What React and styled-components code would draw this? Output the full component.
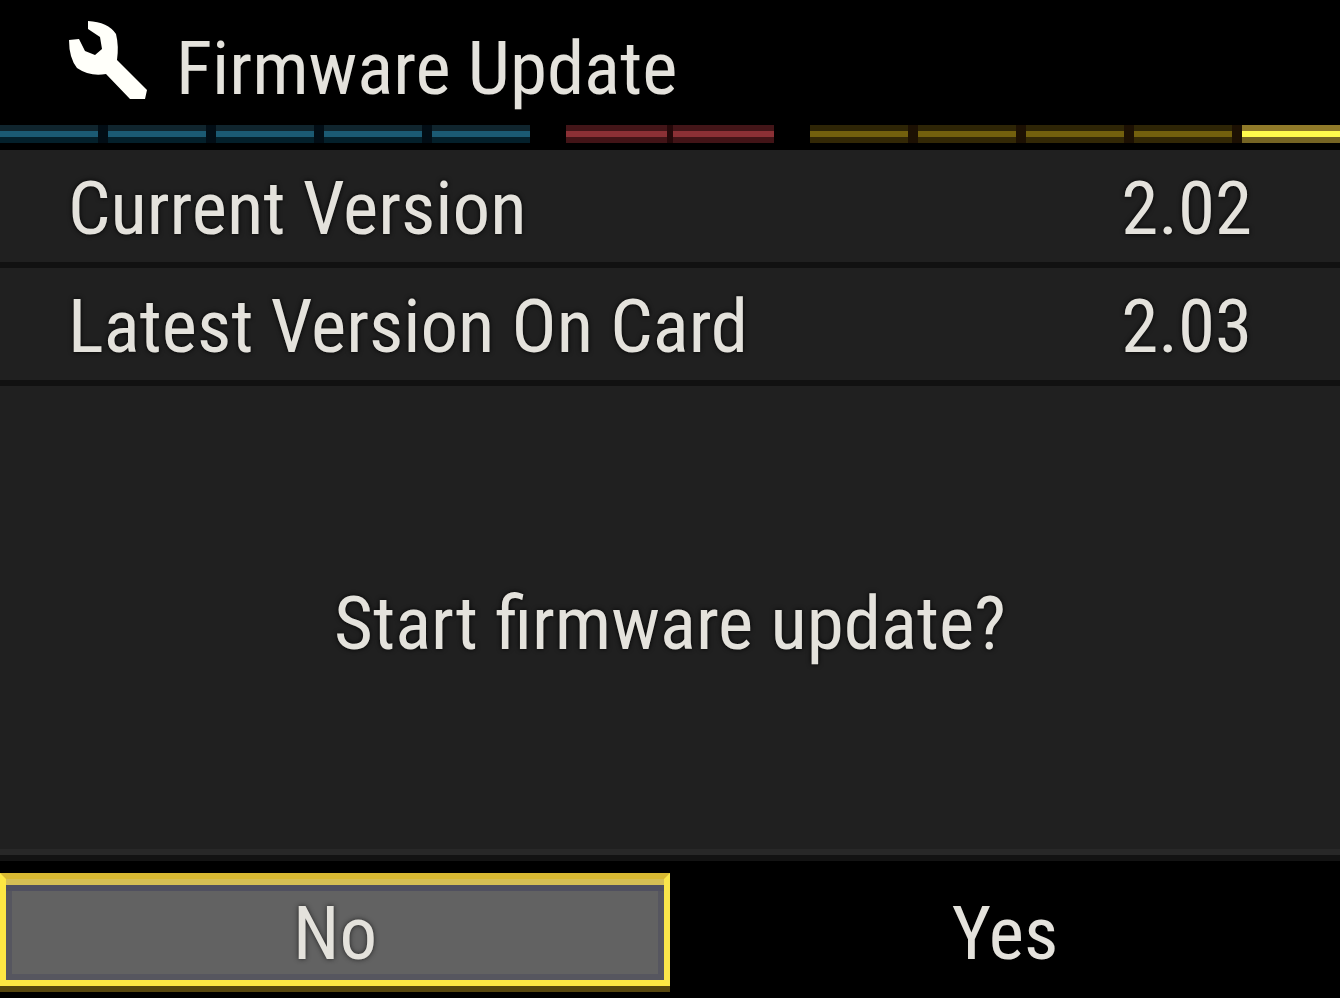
import React from "react";
import styled, { createGlobalStyle } from "styled-components";

const GlobalStyle = createGlobalStyle`
  * { box-sizing: border-box; }
  body { margin: 0; background: #000; }
`;

const Screen = styled.main`
  display: flex;
  flex-direction: column;
  min-height: 100vh;
  background: #202020;
  color: #e4e2dc;
  font-family: "Roboto Condensed", Roboto, "Liberation Sans", sans-serif;
  font-size: 75px;
  line-height: 96px;
  white-space: nowrap;
`;

const Header = styled.header`
  background: #000;
  padding-bottom: 7px;
`;

const TitleRow = styled.div`
  display: flex;
  align-items: center;
  gap: 28px;
  height: 125px;
  padding: 10px 68px 0;
`;

const WrenchIcon = styled.svg`
  width: 80px;
  height: 82px;
  margin-bottom: 14px;
  flex: none;
`;

const Title = styled.h1`
  margin: 0;
  font: inherit;
`;

const Tabs = styled.div`
  display: flex;
  gap: 36px;
  height: 18px;
`;

const TabGroup = styled.div`
  display: flex;
  flex: ${(p) => p.$share} 1 0;
  gap: ${(p) => p.$gap}px;
  background: ${(p) => p.$back};
`;

const tones = {
  blue: ["#10252e", "#1b5a73", "#04202b"],
  red: ["#431518", "#8b3035", "#421417"],
  gold: ["#2e2506", "#73600d", "#332806"],
  active: ["#907a29", "#fffa4c", "#756424"],
};

const Tab = styled.span`
  flex: 1;
  background: linear-gradient(
    ${(p) => tones[p.$tone][0]} 0 6px,
    ${(p) => tones[p.$tone][1]} 6px 12px,
    ${(p) => tones[p.$tone][2]} 12px
  );
`;

const Versions = styled.dl`
  margin: 0;
`;

const VersionRow = styled.div`
  display: flex;
  justify-content: space-between;
  height: 118px;
  padding: 10px 88px 0 68px;
  border-bottom: 6px solid #111;
  text-shadow: 0 0 5px #000;
`;

const Label = styled.dt``;

const Value = styled.dd`
  margin: 0;
`;

const Prompt = styled.p`
  display: flex;
  flex: 1;
  align-items: center;
  justify-content: center;
  margin: 0;
  padding-top: 10px;
  border-bottom: 6px solid #282828;
  text-shadow: 0 0 5px #000;
`;

const Footer = styled.footer`
  display: grid;
  grid-template-columns: 1fr 1fr;
  padding: 12px 0 12px;
  border-top: 6px solid #131313;
  background: #000;
`;

const Choice = styled.button`
  height: 113px;
  padding: 6px 0 0;
  border: 6px solid transparent;
  outline: none;
  background: #000;
  color: inherit;
  font: inherit;

  ${(p) =>
    p.$selected &&
    `
    border-color: #d8b932 #fae64b #fde743 #fde743;
    background: #626262;
    box-shadow:
      inset 0 6px #d6bf55,
      inset 0 12px #50505f,
      inset 0 0 0 6px #56565f,
      0 6px #57470f,
      2px 0 #806b20;
    text-shadow: 0 0 5px #222;
  `}
`;

export default function App() {
  return (
    <Screen>
      <GlobalStyle />
      <Header>
        <TitleRow>
          <WrenchIcon viewBox="0 0 80 82" aria-hidden="true">
            <path
              d="M20 1 Q40 2 48 14 Q51 26 49 40 L79 70 L77 79 L62 79 L38 54 Q22 57 9 48 Q1 38 1 20 L11 19 L17 31 L27 35 L34 29 L32 17 L20 9 Z"
              fill="#fffffa"
            />
          </WrenchIcon>
          <Title>Firmware Update</Title>
        </TitleRow>
        <Tabs aria-hidden="true">
          <TabGroup $share={530} $gap={10} $back="#020d15">
            {[1, 2, 3, 4, 5].map((n) => <Tab key={n} $tone="blue" />)}
          </TabGroup>
          <TabGroup $share={207} $gap={6} $back="#240809">
            {[1, 2].map((n) => <Tab key={n} $tone="red" />)}
          </TabGroup>
          <TabGroup $share={530} $gap={10} $back="#1c1003">
            {[1, 2, 3, 4].map((n) => <Tab key={n} $tone="gold" />)}
            <Tab $tone="active" />
          </TabGroup>
        </Tabs>
      </Header>
      <Versions>
        <VersionRow>
          <Label>Current Version</Label>
          <Value>2.02</Value>
        </VersionRow>
        <VersionRow>
          <Label>Latest Version On Card</Label>
          <Value>2.03</Value>
        </VersionRow>
      </Versions>
      <Prompt>Start firmware update?</Prompt>
      <Footer>
        <Choice type="button" $selected>No</Choice>
        <Choice type="button">Yes</Choice>
      </Footer>
    </Screen>
  );
}
